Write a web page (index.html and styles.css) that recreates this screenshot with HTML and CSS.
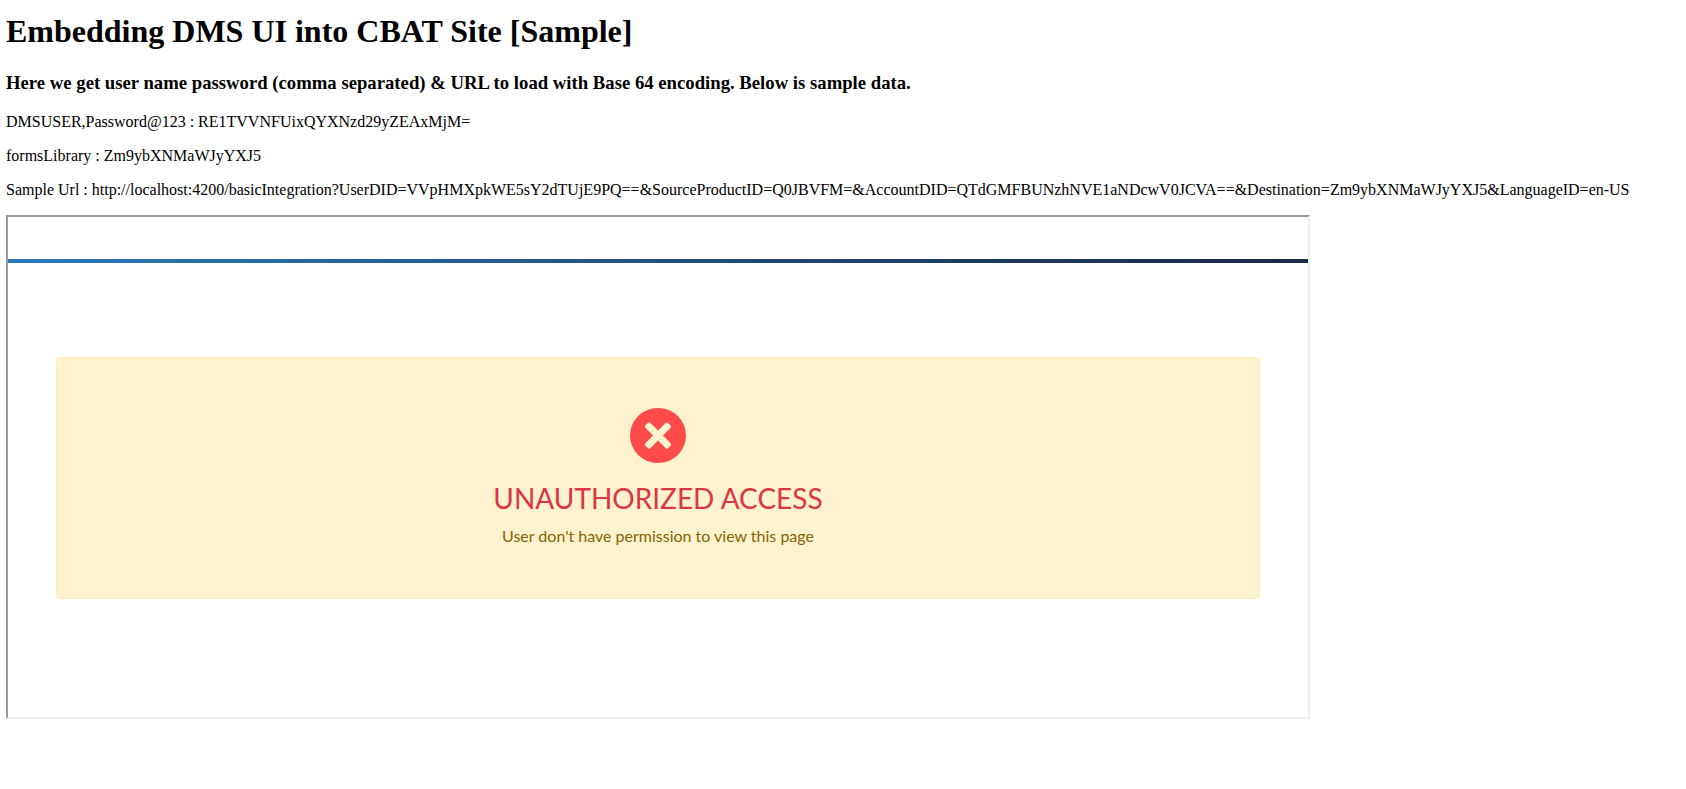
FILE: index.html
```html
<!DOCTYPE html>
<html lang="en">
<head>
  <meta charset="UTF-8" />
  <meta name="viewport" content="width=device-width, initial-scale=1.0"/>
  <title>Embedding DMS UI</title>
  <link rel="stylesheet" href="styles.css">
</head>
<body>

  <h1>Embedding DMS UI into CBAT Site [Sample]</h1>
  <h3>Here we get user name password (comma separated) &amp; URL to load with Base 64 encoding. Below is sample data.</h3>

  <p>DMSUSER,Password@123 : RE1TVVNFUixQYXNzd29yZEAxMjM=</p>
  <p>formsLibrary : Zm9ybXNMaWJyYXJ5</p>
  <p>Sample Url : http://localhost:4200/basicIntegration?UserDID=VVpHMXpkWE5sY2dTUjE9PQ==&amp;SourceProductID=Q0JBVFM=&amp;AccountDID=QTdGMFBUNzhNVE1aNDcwV0JCVA==&amp;Destination=Zm9ybXNMaWJyYXJ5&amp;LanguageID=en-US</p>

  <!-- Embedded DMS page -->
  <main class="dms-frame">
    <div class="top-line"></div>

    <div class="alert" role="alert">
      <svg class="alert-icon" viewBox="0 0 56 56" aria-hidden="true">
        <ellipse cx="28" cy="27.500" rx="28" ry="27.500" fill="#ff4a4a"/>
        <g fill="#fff2ce">
          <rect x="12" y="24" width="32" height="7" rx="1.500" transform="rotate(45 28 27.500)"/>
          <rect x="12" y="24" width="32" height="7" rx="1.500" transform="rotate(-45 28 27.500)"/>
        </g>
      </svg>
      <h2>UNAUTHORIZED ACCESS</h2>
      <p>User don't have permission to view this page</p>
    </div>
  </main>

</body>
</html>
```
FILE: styles.css
```css
body {
  font-family: 'Liberation Serif', 'Times New Roman', serif;
  margin: 0;
  padding: 13px 6px;
  background-color: white;
  color: black;
}

h1 {
  margin: 0 0 22px;
}

h3 {
  margin: 0 0 19px;
}

p {
  margin: 0 0 16px;
  line-height: 18px;
  overflow-wrap: anywhere;
}

.dms-frame {
  box-sizing: border-box;
  max-width: 1304px;
  min-height: 504px;
  padding-top: 42px;
  border: 2px solid;
  border-color: #9a9a9a #eeeeee #eeeeee #9a9a9a;
  font-family: Lato, sans-serif;
}

.top-line {
  height: 4px;
  background: linear-gradient(to right, #2a7aba, #1b2743);
}

.alert {
  margin: 94px 48px 0;
  padding: 50px 20px;
  border: 1px solid #ffeeba;
  border-radius: 4px;
  background-color: #fff2ce;
  color: #856404;
  text-align: center;
}

.alert-icon {
  display: block;
  width: 56px;
  height: 56px;
  margin: 0 auto 16px;
}

.alert h2 {
  margin: 0 0 8px;
  font-size: 28px;
  font-weight: 400;
  line-height: 36px;
  color: #dc3545;
}

.alert p {
  margin: 0;
  font-size: 16px;
  line-height: 24px;
}
```
